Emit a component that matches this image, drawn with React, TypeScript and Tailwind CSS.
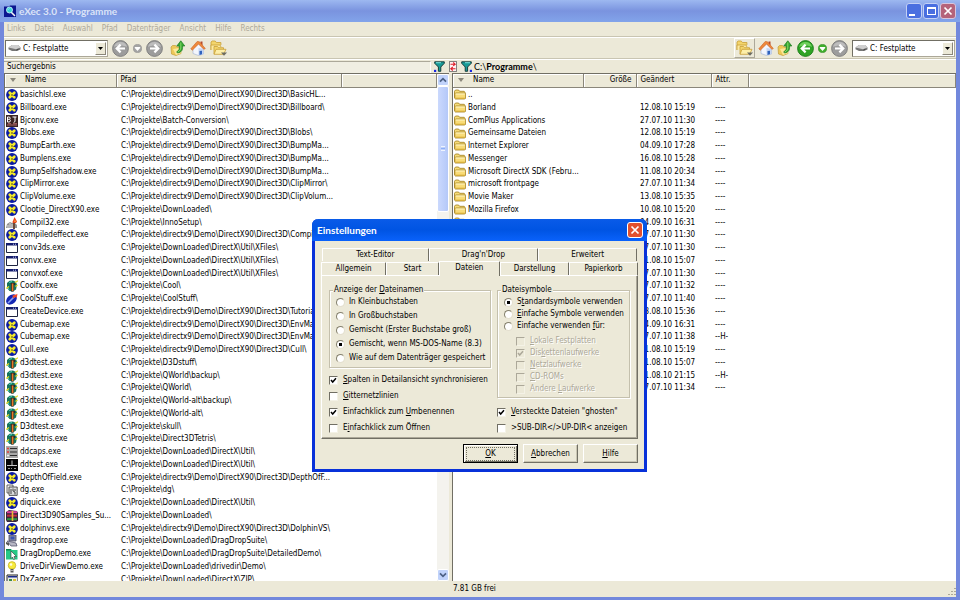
import { useState, type ReactNode } from 'react'
import clsx from 'clsx'

type FileKind =
  | 'dx'
  | 'bj'
  | 'setup'
  | 'app'
  | 'cool'
  | 'stuff'
  | 'caps'
  | 'ddtest'
  | 'dg'
  | 'rar'
  | 'drag'
  | 'dragdemo'
  | 'bulb'
  | 'zager'

const D3D = 'C:\\Projekte\\directx9\\Demo\\DirectX90\\Direct3D\\'

const files: [FileKind, string, string][] = [
  ['dx', 'basichlsl.exe', D3D + 'BasicHL...'],
  ['dx', 'Billboard.exe', D3D + 'Billboard\\'],
  ['bj', 'Bjconv.exe', 'C:\\Projekte\\Batch-Conversion\\'],
  ['dx', 'Blobs.exe', D3D + 'Blobs\\'],
  ['dx', 'BumpEarth.exe', D3D + 'BumpMa...'],
  ['dx', 'Bumplens.exe', D3D + 'BumpMa...'],
  ['dx', 'BumpSelfshadow.exe', D3D + 'BumpMa...'],
  ['dx', 'ClipMirror.exe', D3D + 'ClipMirror\\'],
  ['dx', 'ClipVolume.exe', D3D + 'ClipVolum...'],
  ['dx', 'Clootie_DirectX90.exe', 'C:\\Projekte\\DownLoaded\\'],
  ['setup', 'Compil32.exe', 'C:\\Projekte\\InnoSetup\\'],
  ['dx', 'compiledeffect.exe', D3D + 'Compile...'],
  ['app', 'conv3ds.exe', 'C:\\Projekte\\DownLoaded\\DirectX\\Util\\XFiles\\'],
  ['app', 'convx.exe', 'C:\\Projekte\\DownLoaded\\DirectX\\Util\\XFiles\\'],
  ['app', 'convxof.exe', 'C:\\Projekte\\DownLoaded\\DirectX\\Util\\XFiles\\'],
  ['cool', 'Coolfx.exe', 'C:\\Projekte\\Cool\\'],
  ['stuff', 'CoolStuff.exe', 'C:\\Projekte\\CoolStuff\\'],
  ['app', 'CreateDevice.exe', D3D + 'Tutorial...'],
  ['dx', 'Cubemap.exe', D3D + 'EnvMap...'],
  ['dx', 'Cubemap.exe', D3D + 'EnvMap...'],
  ['dx', 'Cull.exe', D3D + 'Cull\\'],
  ['cool', 'd3dtest.exe', 'C:\\Projekte\\D3Dstuff\\'],
  ['cool', 'd3dtest.exe', 'C:\\Projekte\\QWorld\\backup\\'],
  ['cool', 'd3dtest.exe', 'C:\\Projekte\\QWorld\\'],
  ['cool', 'd3dtest.exe', 'C:\\Projekte\\QWorld-alt\\backup\\'],
  ['cool', 'd3dtest.exe', 'C:\\Projekte\\QWorld-alt\\'],
  ['cool', 'D3dtest.exe', 'C:\\Projekte\\skull\\'],
  ['cool', 'd3dtetris.exe', 'C:\\Projekte\\Direct3DTetris\\'],
  ['caps', 'ddcaps.exe', 'C:\\Projekte\\DownLoaded\\DirectX\\Util\\'],
  ['ddtest', 'ddtest.exe', 'C:\\Projekte\\DownLoaded\\DirectX\\Util\\'],
  ['dx', 'DepthOfField.exe', D3D + 'DepthOfF...'],
  ['dg', 'dg.exe', 'C:\\Projekte\\dg\\'],
  ['dx', 'diquick.exe', 'C:\\Projekte\\DownLoaded\\DirectX\\Util\\'],
  ['rar', 'Direct3D90Samples_Su...', 'C:\\Projekte\\DownLoaded\\'],
  ['dx', 'dolphinvs.exe', D3D + 'DolphinVS\\'],
  ['drag', 'dragdrop.exe', 'C:\\Projekte\\DownLoaded\\DragDropSuite\\'],
  ['dragdemo', 'DragDropDemo.exe', 'C:\\Projekte\\DownLoaded\\DragDropSuite\\DetailedDemo\\'],
  ['bulb', 'DriveDirViewDemo.exe', 'C:\\Projekte\\DownLoaded\\drivedir\\Demo\\'],
  ['zager', 'DxZager.exe', 'C:\\Projekte\\DownLoaded\\DirectX\\ZIP\\'],
]

const folders: [string, string, string][] = [
  ['..', '', ''],
  ['Borland', '12.08.10 15:19', '----'],
  ['ComPlus Applications', '27.07.10 11:30', '----'],
  ['Gemeinsame Dateien', '12.08.10 15:19', '----'],
  ['Internet Explorer', '04.09.10 17:28', '----'],
  ['Messenger', '16.08.10 15:28', '----'],
  ['Microsoft DirectX SDK (Febru...', '11.08.10 20:34', '----'],
  ['microsoft frontpage', '27.07.10 11:34', '----'],
  ['Movie Maker', '13.08.10 15:35', '----'],
  ['Mozilla Firefox', '10.08.10 15:20', '----'],
  ['', '04.09.10 16:31', '----'],
  ['', '27.07.10 11:30', '----'],
  ['', '27.07.10 11:30', '----'],
  ['', '11.08.10 15:07', '----'],
  ['', '27.07.10 11:30', '----'],
  ['', '27.07.10 11:32', '----'],
  ['', '27.07.10 11:40', '----'],
  ['', '13.08.10 15:36', '----'],
  ['', '04.09.10 16:31', '----'],
  ['', '27.07.10 11:38', '--H-'],
  ['', '11.08.10 15:19', '----'],
  ['', '11.08.10 15:07', '----'],
  ['', '11.08.10 21:15', '--H-'],
  ['', '27.07.10 11:34', '----'],
]

function FileIcon({ kind }: { kind: FileKind }) {
  return (
    <svg viewBox="0 0 12 12" className="block size-3 shrink-0">
      {kind === 'dx' && (
        <>
          <circle cx="6" cy="6" r="5.9" fill="#0a1aa4" />
          <path d="M3.7 3.7l4.6 4.6M8.3 3.7L3.700 8.300" stroke="#f4ea2a" strokeWidth="2.700" strokeLinecap="round" />
          <path d="M6 5v2M5 6h2" stroke="#6a6418" strokeWidth=".7" />
        </>
      )}
      {kind === 'bj' && (
        <>
          <path d="M0 0h12v12H0z" fill="#3a2424" />
          <path d="M1.5 2v5h2.2M1.5 2h2l.8 1.2-.8 1 .9 1.3-.7 1.5M1.5 4.3h2M6.5 2h4M9 2v4.6L7.6 7.4" stroke="#fff" fill="none" strokeWidth="1" />
          <path d="M1 10h10M2 8.7h3M7 8.7h4" stroke="#b06a6a" strokeWidth="1" />
        </>
      )}
      {kind === 'setup' && (
        <>
          <path d="M0 11l1-4 3-2 2 1 2-1 3 3v3z" fill="#909090" />
          <path d="M2 11V8M4 11V6M6 11V7" stroke="#f0f0f0" strokeWidth=".8" />
          <path d="M7 12V6h2v6z" fill="#6d4a3a" />
          <path d="M6.5 5L8.5 0 11 4.5 10 6H7z" fill="#e8431c" />
          <path d="M8 5l1-2.5L10 5z" fill="#f9a13a" />
        </>
      )}
      {kind === 'app' && (
        <>
          <path d="M.5 1.5h11v9H.5z" fill="#fff" stroke="#1d2340" />
          <path d="M0 1h12v2.5H0z" fill="#141c6c" />
          <path d="M7 2.2h1M9 2.2h1" stroke="#cfd6ff" strokeWidth=".9" />
        </>
      )}
      {kind === 'cool' && (
        <>
          <path d="M1 3l2.500-2.200L7 .500l3 1.500 1 3-1 4.500L7 11.500l-3.500-.500L1 8z" fill="#17735c" />
          <path d="M3 2.500l3-1M2.200 8l1 1.500" stroke="#48d0b4" strokeWidth="1" />
          <path d="M4.500 3H9v2H7.700v6.500H5V5z" fill="#2c2a24" />
          <path d="M5.800 3.500h1.600v7.500H5.800z" fill="#e8792a" />
          <path d="M0 8.500l3-2M9 2.500L12 .800M9.500 6.500L11.500 5" stroke="#e4dc2c" strokeWidth="1.400" fill="none" />
        </>
      )}
      {kind === 'stuff' && (
        <>
          <ellipse cx="5.5" cy="6.5" rx="6" ry="4.3" transform="rotate(-42 5.5 6.5)" fill="#1426b4" />
          <path d="M2 10L9 3" stroke="#8da2f4" strokeWidth="1.6" />
          <path d="M6.5 2.5L11.5 1l-.8 4-1.5-1L7 5.5z" fill="#ee4a28" />
        </>
      )}
      {kind === 'caps' && (
        <>
          <path d="M0 0h12v12H0z" fill="#a8a8a8" />
          <path d="M4 2.5h7M4 6h7M4 9.5h7" stroke="#2d2d2d" strokeWidth="1.2" />
          <path d="M1 2.5h2M1 6h2" stroke="#e23c3c" strokeWidth="1.6" />
          <path d="M1 9.5h2" stroke="#eee" strokeWidth="1.4" />
        </>
      )}
      {kind === 'ddtest' && (
        <>
          <path d="M0 0h12v12H0z" fill="#050505" />
          <path d="M1 6.5h10M6 1.5v5" stroke="#dcdcdc" strokeWidth=".9" />
          <path d="M2 9.5h2M5 9.5h1M8 9.5h2" stroke="#999" strokeWidth="1" />
        </>
      )}
      {kind === 'dg' && (
        <>
          <path d="M1 1h6v8H1z" fill="#eee" stroke="#444" strokeWidth=".8" />
          <path d="M3 3h8.2v8.4H3z" fill="#dcdcdc" stroke="#333" strokeWidth=".8" />
          <path d="M5 5v5M7 4.500V7l2 1v2.500M9 5v2" stroke="#333" strokeWidth=".9" fill="none" />
        </>
      )}
      {kind === 'rar' && (
        <>
          <path d="M0 2l3-2 8 1 1 2v8l-2 1H1l-1-2z" fill="#3b2740" />
          <path d="M1 2.200h10" stroke="#d8409c" strokeWidth="2" />
          <path d="M1 5.600h10" stroke="#c42c3c" strokeWidth="2" />
          <path d="M1 9.200h10" stroke="#2e9a3c" strokeWidth="2" />
          <path d="M6.500 1v10" stroke="#e8bb3a" strokeWidth="1.600" />
        </>
      )}
      {kind === 'drag' && (
        <>
          <path d="M3 0h7v6H3z" fill="#8e8ea4" stroke="#444a66" strokeWidth=".8" />
          <path d="M4.5 1.5h4v3h-4z" fill="#3a55b0" />
          <path d="M1 6l5 1 4 1 1 3H5z" fill="#b7b7c5" stroke="#4a4a66" strokeWidth=".7" />
          <path d="M0 7l3 1v3L0 9z" fill="#555" />
        </>
      )}
      {kind === 'dragdemo' && (
        <>
          <path d="M0 1h5l1 1h5.5v9.5H0z" fill="#25c886" />
          <path d="M0 1h5v1.5H0z" fill="#11804f" />
          <path d="M5 3l5.5 5.5H8L9 11l-1.500.5-1-2.500L5 10.500z" fill="#fff" stroke="#333" strokeWidth=".6" />
        </>
      )}
      {kind === 'bulb' && (
        <>
          <circle cx="6" cy="4.400" r="3.800" fill="#f7ea3c" stroke="#b9a31c" strokeWidth=".6" />
          <circle cx="5" cy="3.500" r="1.300" fill="#fffde0" />
          <path d="M4.500 8h3v3.500h-3z" fill="#5a5a5a" />
          <path d="M4.500 9.500h3" stroke="#ddd" strokeWidth=".7" />
        </>
      )}
      {kind === 'zager' && (
        <>
          <path d="M1 1h11v9H1z" fill="#ececec" stroke="#222" strokeWidth="1" />
          <path d="M2 2h9v1.500H2z" fill="#1a2a8a" />
          <path d="M3 5h3v3H3z" fill="#3c8a4a" />
          <path d="M7 5h3v3H7z" fill="#d8c232" />
        </>
      )}
    </svg>
  )
}

function FolderIcon() {
  return (
    <svg viewBox="0 0 12 11" className="block h-[11px] w-3 shrink-0">
      <path d="M.5 8.800V2.200L1.500 1H4.600l1 1.300h4.600l.8 1V5" fill="#f6dc78" stroke="#a07c1c" strokeWidth=".8" />
      <path d="M.8 9.500V4.800l.8-.8h9.200l.8.800v4.400l-.8.800H1.400z" fill="#f9dc78" stroke="#a07c1c" strokeWidth=".8" />
      <path d="M1.600 5h9.200" stroke="#fff6c8" strokeWidth="1" />
      <path d="M1.500 9.200h9.300" stroke="#d9ab30" strokeWidth=".9" />
    </svg>
  )
}

function AppLogo() {
  return (
    <svg viewBox="0 0 12 12" className="block size-3">
      <path d="M0 1.500h5l1-1h6V12H0z" fill="#0b1690" />
      <path d="M7.500 7.500l3 3" stroke="#f5f5f5" strokeWidth="1.600" strokeLinecap="round" />
      <circle cx="5.500" cy="5" r="3" fill="#39d3d8" stroke="#dff" strokeWidth=".8" />
      <path d="M4.300 4.500l1-1" stroke="#fff" strokeWidth=".8" />
    </svg>
  )
}

function RoundArrow({ flip, green }: { flip?: boolean; green?: boolean }) {
  return (
    <svg viewBox="0 0 17 17" className={clsx('block size-[17px]', flip && '-scale-x-100')}>
      <circle cx="8.500" cy="8.500" r="7.900" fill={green ? '#2fa325' : '#9c9c9c'} stroke={green ? '#1c7d1a' : '#7c7c7c'} strokeWidth=".9" />
      <path d="M2 7a6.700 6.700 0 0 1 13 0c-4-2-9-2-13 0z" fill={green ? '#6fd05c' : '#bdbdbd'} />
      <path d="M13 8.500H5M8.600 4.600L4.700 8.500l3.900 3.900" stroke="#fff" strokeWidth="2.200" fill="none" />
    </svg>
  )
}

function SmallDown({ green }: { green?: boolean }) {
  return (
    <svg viewBox="0 0 9 9" className="block size-[9px]">
      <circle cx="4.500" cy="4.500" r="4.100" fill={green ? '#3fae2c' : '#a4a4a4'} stroke={green ? '#2b8a22' : '#8c8c8c'} strokeWidth=".6" />
      <path d="M1.800 3h5.400v1L4.500 7 1.800 4z" fill="#fff" />
    </svg>
  )
}

function UpFolder() {
  return (
    <svg viewBox="0 0 16 16" className="block size-4">
      <path d="M1 7l1.500-1.500h3L7 7h3.500l.5 6.500L6 15.500 1.500 14z" fill="#edc858" stroke="#c39c38" strokeWidth=".7" />
      <path d="M3 9l6-1 2.500 5L6 15z" fill="#fbe798" />
      <path d="M7.500 13c4-.6 5.500-3 5-7h2.300L10.800.800 6.800 6h2.500c.3 2.800-.3 4.800-2.600 5.800z" fill="#35a832" stroke="#1e7a20" strokeWidth=".7" />
      <path d="M10.800 2.500V6c.3 3-.8 5-3 6" stroke="#8fdc6c" strokeWidth=".9" fill="none" />
    </svg>
  )
}

function HomeIcon() {
  return (
    <svg viewBox="0 0 16 16" className="block size-4">
      <path d="M10.500 1.500h2v4h-2z" fill="#b5482c" />
      <path d="M3 8.500l5-5 5.500 5V14l-5 1.500L3 13.500z" fill="#f3f6fd" stroke="#9fb0d2" strokeWidth=".6" />
      <path d="M8.500 15.300V8l4.800.8V14z" fill="#c5d5f3" />
      <path d="M9.500 15v-4l2.500-.2V14.300z" fill="#2f62bd" />
      <path d="M.8 8.800L7.200 1.500l2.300.3 5.800 6.700-1.500.8L8.600 4 2.300 10.200z" fill="#ef8a3c" stroke="#cb5f22" strokeWidth=".6" />
    </svg>
  )
}

function FavFolder() {
  return (
    <svg viewBox="0 0 17 16" className="block h-4 w-[17px]">
      <path d="M1 10V2l1.200-1h3l1.200 1.500h4.500V5" fill="#f3d56c" stroke="#c89e36" strokeWidth=".8" />
      <path d="M1 10V5h9l1 2" fill="#fceaa0" stroke="#c89e36" strokeWidth=".8" />
      <path d="M4 14V6.500h3.500l1 1.200h5V9.500" fill="#f3d56c" stroke="#c89e36" strokeWidth=".8" />
      <path d="M4 14.300l2-5h10l-2.500 5z" fill="#fdeea8" stroke="#c89e36" strokeWidth=".8" />
      <path d="M11 12.500h6L14 15.800z" fill="#6b6b60" />
    </svg>
  )
}

function DriveIcon() {
  return (
    <svg viewBox="0 0 13 8" className="block h-2 w-[13px]">
      <path d="M.5 3.500L4 1h6l2.500 2.500v2L9 7H4L.5 5.200z" fill="#777" />
      <path d="M.5 3.500L4 1h6l2.500 2.500L8 5.200z" fill="#cfcfcf" />
      <path d="M8.500 6l2-.7" stroke="#333" strokeWidth=".8" />
    </svg>
  )
}

function FilterIcon({ flip }: { flip?: boolean }) {
  return (
    <svg viewBox="0 0 11 11" className={clsx('block size-[11px]', flip && '-scale-x-100')}>
      <path d="M.7.8h9.600v1.500L6.800 6v4.300H4.400V6L.7 2.300z" fill="#189a96" stroke="#10302f" strokeWidth=".9" />
      <path d="M2 1.700h5" stroke="#8be9e6" strokeWidth=".9" />
      <path d="M0 8.800h2.200V11H0z" fill="#1826e0" />
    </svg>
  )
}

function SwapIcon() {
  return (
    <svg viewBox="0 0 8 11" className="block h-[11px] w-2">
      <path d="M.4.400h7.200v10.200H.4z" fill="#fdf3f3" stroke="#555" strokeWidth=".8" />
      <path d="M1.500 3.200h4M4.200 1.500L6.200 3.200 4.200 4.900M6.500 7.800h-4M3.800 6L1.800 7.800l2 1.700" stroke="#dd1f2b" strokeWidth="1.100" fill="none" />
    </svg>
  )
}

function ToolButton({ label, raised, children }: { label: string; raised?: boolean; children: ReactNode }) {
  return (
    <button
      type="button"
      aria-label={label}
      className={clsx(
        'flex h-5 shrink-0 items-center justify-center',
        raised && 'border-r border-b border-[#aca899] border-t border-l border-t-white border-l-white px-px',
      )}
    >
      {children}
    </button>
  )
}

function DriveSelect({ label }: { label: string }) {
  return (
    <div className="relative w-[103px] shrink-0 border border-[#aca899] border-t-[#716f64] border-l-[#716f64] bg-white">
      <select
        aria-label={label}
        className="block h-[15px] w-full appearance-none bg-transparent pl-[17px] text-[8px] leading-[15px] text-black outline-none"
      >
        <option>C: Festplatte</option>
      </select>
      <span className="pointer-events-none absolute top-[3px] left-[2px]">
        <DriveIcon />
      </span>
      <span className="pointer-events-none absolute top-px right-px flex h-[13px] w-[11px] items-center justify-center border border-[#8a867a] border-t-white border-l-white bg-[#ece9d8]">
        <svg viewBox="0 0 5 3" className="h-[3px] w-[5px]">
          <path d="M0 0h5L2.500 3z" fill="#000" />
        </svg>
      </span>
    </div>
  )
}

function HeaderCell({ children, className }: { children?: ReactNode; className?: string }) {
  return (
    <th
      scope="col"
      className={clsx(
        'h-[13px] border-r border-b border-[#8a867a] bg-[#ece9d8] p-0 px-1 text-left font-normal leading-3 shadow-[inset_1px_1px_0_#fff]',
        className,
      )}
    >
      {children}
    </th>
  )
}

function SortMark() {
  return (
    <svg viewBox="0 0 6 4" className="mr-[9px] ml-px inline-block h-1 w-[6px] align-middle">
      <path d="M0 0h6L3 4z" fill="#8a867a" />
    </svg>
  )
}

// every fourth row is a pixel shorter so the list keeps its 51px rhythm
const rowClass = 'h-[13px] nth-[4n]:h-3'
const cellClass = 'truncate p-0 leading-3'

function FileList() {
  return (
    <table className="w-full table-fixed border-collapse">
      <thead>
        <tr>
          <HeaderCell className="w-[111px]">
            <SortMark />
            Name
          </HeaderCell>
          <HeaderCell className="w-[225px]">Pfad</HeaderCell>
          <HeaderCell />
        </tr>
        <tr className="h-px" />
      </thead>
      <tbody>
        {files.map(([kind, name, path], i) => (
          <tr key={i} className={rowClass}>
            <td className={cellClass}>
              <span className="flex h-3 items-center gap-[2px] pl-px">
                <FileIcon kind={kind} />
                {name}
              </span>
            </td>
            <td className={clsx(cellClass, 'pl-[5px]')}>{path}</td>
            <td className="p-0" />
          </tr>
        ))}
      </tbody>
    </table>
  )
}

function FolderList() {
  return (
    <table className="w-full table-fixed border-collapse">
      <thead>
        <tr>
          <HeaderCell className="w-[130px]">
            <SortMark />
            Name
          </HeaderCell>
          <HeaderCell className="w-[53px] text-right">Größe</HeaderCell>
          <HeaderCell className="w-[75px]">Geändert</HeaderCell>
          <HeaderCell className="w-[37px]">Attr.</HeaderCell>
          <HeaderCell />
        </tr>
        <tr className="h-px" />
      </thead>
      <tbody>
        {folders.map(([name, date, attr], i) => (
          <tr key={i} className={rowClass}>
            <td className={cellClass}>
              <span className="flex h-3 items-center gap-[2px] pl-px">
                <FolderIcon />
                {name}
              </span>
            </td>
            <td className="p-0" />
            <td className={clsx(cellClass, 'pl-1')}>{date}</td>
            <td className={clsx(cellClass, 'pl-1')}>{attr}</td>
            <td className="p-0" />
          </tr>
        ))}
      </tbody>
    </table>
  )
}

function ScrollArrow({ down }: { down?: boolean }) {
  return (
    <button
      type="button"
      aria-label={down ? 'Nach unten' : 'Nach oben'}
      className="flex h-3 w-full shrink-0 items-center justify-center rounded-[2px] border border-white bg-[#c1d3fb]"
    >
      <svg viewBox="0 0 8 6" className={clsx('h-[6px] w-2', down && 'rotate-180')}>
        <path d="M1 4.700L4 1.700l3 3" stroke="#4d6185" strokeWidth="1.700" fill="none" />
      </svg>
    </button>
  )
}

function ScrollBar() {
  return (
    <div className="flex w-3 shrink-0 flex-col bg-[#f4f3ee]">
      <ScrollArrow />
      <div className="min-h-0 flex-1">
        <div className="flex h-[26%] flex-col items-center justify-center gap-px rounded-[2px] border border-white bg-linear-to-r from-[#cbd9fd] to-[#b4c8f8]">
          <span className="h-px w-1 bg-[#eef4fe]" />
          <span className="h-px w-1 bg-[#8cb0f8]" />
          <span className="h-px w-1 bg-[#eef4fe]" />
        </div>
      </div>
      <ScrollArrow down />
    </div>
  )
}

function Radio({ name, checked, onChange, children }: { name: string; checked: boolean; onChange: () => void; children: ReactNode }) {
  return (
    <label className="flex items-center gap-1 whitespace-nowrap leading-3">
      <input
        type="radio"
        name={name}
        checked={checked}
        onChange={onChange}
        className="size-[9px] shrink-0 appearance-none rounded-full border border-[#e4e0d0] border-t-[#85816f] border-l-[#85816f] bg-white bg-clip-padding checked:bg-[radial-gradient(circle,#000_1.5px,#fff_2px)]"
      />
      <span>{children}</span>
    </label>
  )
}

function Check({ defaultChecked, disabled, className, children }: { defaultChecked?: boolean; disabled?: boolean; className?: string; children: ReactNode }) {
  return (
    <label className={clsx('flex items-center gap-[5px] whitespace-nowrap leading-3', disabled && 'text-[#aca899] [text-shadow:1px_1px_0_#fff]', className)}>
      <span className="grid size-[9px] shrink-0">
        <input
          type="checkbox"
          defaultChecked={defaultChecked}
          disabled={disabled}
          className="peer col-start-1 row-start-1 size-[9px] appearance-none border border-[#f4f2e6] border-t-[#716f64] border-l-[#716f64] bg-white disabled:border-t-[#aca899] disabled:border-l-[#aca899] disabled:bg-[#ece9d8]"
        />
        <svg viewBox="0 0 9 9" className="pointer-events-none invisible col-start-1 row-start-1 size-[9px] peer-checked:visible">
          <path d="M2 4l1.700 2L7 2.300" stroke={disabled ? '#aca899' : '#000'} strokeWidth="1.500" fill="none" />
        </svg>
      </span>
      <span>{children}</span>
    </label>
  )
}

function Tab({ active, className, children }: { active?: boolean; className?: string; children: ReactNode }) {
  return (
    <button
      type="button"
      role="tab"
      aria-selected={!!active}
      className={clsx(
        'rounded-t-[1px] border-t border-r border-l border-t-white border-r-[#716f64] border-l-white text-center leading-3',
        active ? '-mb-px h-[15px] bg-[#ece9d8] pb-[3px]' : 'h-[13px]',
        className,
      )}
    >
      {children}
    </button>
  )
}

function DialogButton({ primary, children }: { primary?: boolean; children: ReactNode }) {
  return (
    <button
      type="button"
      className={clsx(
        'h-[19px] w-[55px] border bg-[#ece9d8] leading-3',
        primary
          ? 'border-black p-px shadow-[inset_1px_1px_0_#fff,inset_-1px_-1px_0_#716f64]'
          : 'border-white border-r-[#716f64] border-b-[#716f64] shadow-[inset_-1px_-1px_0_#c9c5b2]',
      )}
    >
      {primary ? <span className="mx-px block border border-dotted border-[#716f64]">{children}</span> : children}
    </button>
  )
}

const nameModes: ReactNode[] = [
  'In Kleinbuchstaben',
  'In Großbuchstaben',
  'Gemischt (Erster Buchstabe groß)',
  'Gemischt, wenn MS-DOS-Name (8.3)',
  'Wie auf dem Datenträger gespeichert',
]

const symbolModes: ReactNode[] = [
  <>S<u>t</u>andardsymbole verwenden</>,
  <><u>E</u>infache Symbole verwenden</>,
  <>Einfache verwenden <u>f</u>ür:</>,
]

const groupClass = 'min-w-0 border border-[#c4c0ad] px-[6px] shadow-[1px_1px_0_#fff,inset_1px_1px_0_#fff]'

function SettingsDialog() {
  const [nameMode, setNameMode] = useState(3)
  const [symbolMode, setSymbolMode] = useState(0)

  return (
    <div
      role="dialog"
      aria-labelledby="dialog-title"
      className="absolute top-[219px] left-[312px] w-[335px] rounded-t-[6px] border-r-[3px] border-b-[3px] border-l-[3px] border-[#0831d9] bg-[#ece9d8]"
    >
      <div className="-mx-[3px] flex h-[22px] items-center justify-between rounded-t-[6px] bg-linear-to-b from-[#0a5be8] via-[#0054e3] to-[#0a62fb] pr-1 pl-[5px]">
        <h2 id="dialog-title" className="font-['Lato',sans-serif] text-[10px] font-bold text-white">
          Einstellungen
        </h2>
        <button type="button" aria-label="Schließen" className="flex size-4 items-center justify-center rounded-[3px] border border-white bg-[#e2512e]">
          <svg viewBox="0 0 10 10" className="size-[10px]">
            <path d="M1.500 1.500l7 7M8.500 1.500l-7 7" stroke="#fff" strokeWidth="1.700" />
          </svg>
        </button>
      </div>

      <div className="px-[6px] pt-[7px] pb-[6px]">
        <div role="tablist" aria-label="Einstellungen">
          <div className="flex px-px">
            <Tab className="flex-[107]">Text-Editor</Tab>
            <Tab className="flex-[110]">Drag'n'Drop</Tab>
            <Tab className="flex-[99]">Erweitert</Tab>
          </div>
          <div className="flex items-end">
            <Tab className="flex-[65]">Allgemein</Tab>
            <Tab className="flex-[52]">Start</Tab>
            <Tab active className="flex-[61]">Dateien</Tab>
            <Tab className="flex-[69]">Darstellung</Tab>
            <Tab className="flex-[69]">Papierkorb</Tab>
          </div>
        </div>

        <div role="tabpanel" className="flex justify-between border border-white border-r-[#716f64] border-b-[#716f64] px-[7px] pt-2 pb-1 shadow-[inset_-1px_-1px_0_#aca899]">
          <div className="flex w-[162px] flex-col">
            <fieldset className={clsx(groupClass, 'h-[84px]')}>
              <legend className="-ml-[3px] bg-[#ece9d8] px-px leading-3">
                Anzeige der <u>D</u>ateinamen
              </legend>
              <div className="flex flex-col gap-[2px]">
                {nameModes.map((mode, i) => (
                  <Radio key={i} name="names" checked={nameMode === i} onChange={() => setNameMode(i)}>
                    {mode}
                  </Radio>
                ))}
              </div>
            </fieldset>
            <div className="mt-[6px] flex flex-col gap-1">
              <Check defaultChecked><u>S</u>palten in Detailansicht synchronisieren</Check>
              <Check><u>G</u>itternetzlinien</Check>
              <Check defaultChecked>Einfachklick zum <u>U</u>mbenennen</Check>
              <Check>E<u>i</u>nfachklick zum Öffnen</Check>
            </div>
          </div>

          <div className="flex w-[133px] flex-col justify-between">
            <fieldset className={clsx(groupClass, 'h-[114px]')}>
              <legend className="-ml-[3px] bg-[#ece9d8] px-px leading-3">Dateisymbole</legend>
              <div className="flex flex-col">
                {symbolModes.map((mode, i) => (
                  <Radio key={i} name="symbols" checked={symbolMode === i} onChange={() => setSymbolMode(i)}>
                    {mode}
                  </Radio>
                ))}
              </div>
              <div className="mt-[3px] flex flex-col pl-3">
                <Check disabled><u>L</u>okale Festplatten</Check>
                <Check disabled defaultChecked>Dis<u>k</u>ettenlaufwerke</Check>
                <Check disabled><u>N</u>etzlaufwerke</Check>
                <Check disabled><u>C</u>D-ROMs</Check>
                <Check disabled>Andere <u>L</u>aufwerke</Check>
              </div>
            </fieldset>
            <div className="flex flex-col gap-1">
              <Check defaultChecked><u>V</u>ersteckte Dateien "ghosten"</Check>
              <Check>&gt;SUB-DIR&lt;/&gt;UP-DIR&lt; anzeigen</Check>
            </div>
          </div>
        </div>

        <div className="mt-[5px] flex justify-end gap-[5px]">
          <DialogButton primary><u>O</u>K</DialogButton>
          <DialogButton><u>A</u>bbrechen</DialogButton>
          <DialogButton><u>H</u>ilfe</DialogButton>
        </div>
      </div>
    </div>
  )
}

const menus = ['Links', 'Datei', 'Auswahl', 'Pfad', 'Datenträger', 'Ansicht', 'Hilfe', 'Rechts']

export default function App() {
  return (
    <div className="relative flex h-screen flex-col overflow-hidden bg-[#7288dc] px-1 pb-[3px] font-['DejaVu_Sans_Condensed','DejaVu_Sans',sans-serif] text-[8px] text-black">
      <header className="-mx-1 flex h-[22px] shrink-0 items-center gap-[3px] bg-linear-to-b from-[#9db8f0] via-[#7a93df] to-[#82a4ea] px-1">
        <AppLogo />
        <h1 className="flex-1 font-['Lato',sans-serif] text-[10px] font-bold text-[#dbe4f8]">eXec 3.0 - Programme</h1>
        <div className="flex gap-px">
          <button type="button" aria-label="Minimieren" className="flex size-4 items-end rounded-[3px] border border-[#c3d0f5] bg-[#4a6fe0] p-[2px]">
            <span className="h-[2px] w-[6px] bg-white" />
          </button>
          <button type="button" aria-label="Maximieren" className="flex size-4 items-center justify-center rounded-[3px] border border-[#c3d0f5] bg-[#4a6fe0]">
            <span className="h-2 w-[9px] border border-t-2 border-white" />
          </button>
          <button type="button" aria-label="Schließen" className="flex size-4 items-center justify-center rounded-[3px] border border-[#d7c5dd] bg-[#b5637a]">
            <svg viewBox="0 0 10 10" className="size-[10px]">
              <path d="M1.500 1.500l7 7M8.500 1.500l-7 7" stroke="#fff" strokeWidth="1.700" />
            </svg>
          </button>
        </div>
      </header>

      <nav className="flex h-[15px] shrink-0 items-center gap-[9px] border-b border-[#c9c5b2] bg-[#ece9d8] px-[3px] text-[#aca899]">
        {menus.map((menu) => (
          <button key={menu} type="button">
            {menu}
          </button>
        ))}
      </nav>

      <div className="flex h-[22px] shrink-0 items-center justify-between border-t border-b border-t-white border-b-[#c9c5b2] bg-[#ece9d8] px-px">
        <div className="flex items-center">
          <DriveSelect label="Laufwerk links" />
          <div className="ml-1 flex items-center gap-1">
            <ToolButton label="Zurück"><RoundArrow /></ToolButton>
            <ToolButton label="Verlauf"><SmallDown /></ToolButton>
            <ToolButton label="Vorwärts"><RoundArrow flip /></ToolButton>
          </div>
          <div className="ml-[7px] flex items-center gap-1">
            <ToolButton label="Aufwärts"><UpFolder /></ToolButton>
            <ToolButton label="Startordner"><HomeIcon /></ToolButton>
            <ToolButton label="Favoriten"><FavFolder /></ToolButton>
          </div>
        </div>
        <div className="flex items-center">
          <div className="flex items-center gap-[3px]">
            <ToolButton label="Favoriten rechts" raised><FavFolder /></ToolButton>
            <ToolButton label="Startordner rechts"><HomeIcon /></ToolButton>
            <ToolButton label="Aufwärts rechts"><UpFolder /></ToolButton>
          </div>
          <div className="mr-1 ml-1 flex items-center gap-1">
            <ToolButton label="Zurück rechts"><RoundArrow green /></ToolButton>
            <ToolButton label="Verlauf rechts"><SmallDown green /></ToolButton>
            <ToolButton label="Vorwärts rechts"><RoundArrow flip /></ToolButton>
          </div>
          <DriveSelect label="Laufwerk rechts" />
        </div>
      </div>

      <div className="flex h-[14px] shrink-0 items-center border-t border-white bg-[#ece9d8]">
        <div className="flex h-3 w-[427px] items-center border-t border-r border-[#aca899] border-r-white bg-[#f0eee2] pl-[3px]">Suchergebnis</div>
        <div className="flex items-center gap-1 pl-[3px]">
          <button type="button" aria-label="Filter links"><FilterIcon /></button>
          <button type="button" aria-label="Seiten tauschen"><SwapIcon /></button>
          <button type="button" aria-label="Filter rechts"><FilterIcon flip /></button>
        </div>
        <p className="pl-[2px] font-['Lato',sans-serif] text-[9px] leading-3">
          C:\<b>Programme</b>\
        </p>
      </div>

      <main className="flex min-h-0 flex-1 bg-[#ece9d8]">
        <section aria-label="Suchergebnis" className="flex w-[445px] border-t border-l border-[#716f64] bg-white">
          <div className="min-w-0 flex-1 overflow-hidden">
            <FileList />
          </div>
          <ScrollBar />
        </section>
        <section aria-label="Programme" className="ml-[3px] min-w-0 flex-1 overflow-hidden border-t border-l border-[#716f64] bg-white">
          <FolderList />
        </section>
      </main>

      <footer className="flex h-4 shrink-0 items-center bg-[#ece9d8]">
        <p className="flex-1 pl-[449px]">7.81 GB frei</p>
        <svg viewBox="0 0 10 10" className="size-[10px] self-end">
          <path d="M9 1v1M9 4v1M6 4v1M9 7v1M6 7v1M3 7v1" stroke="#aca899" strokeWidth="2" />
        </svg>
      </footer>

      <SettingsDialog />
    </div>
  )
}
